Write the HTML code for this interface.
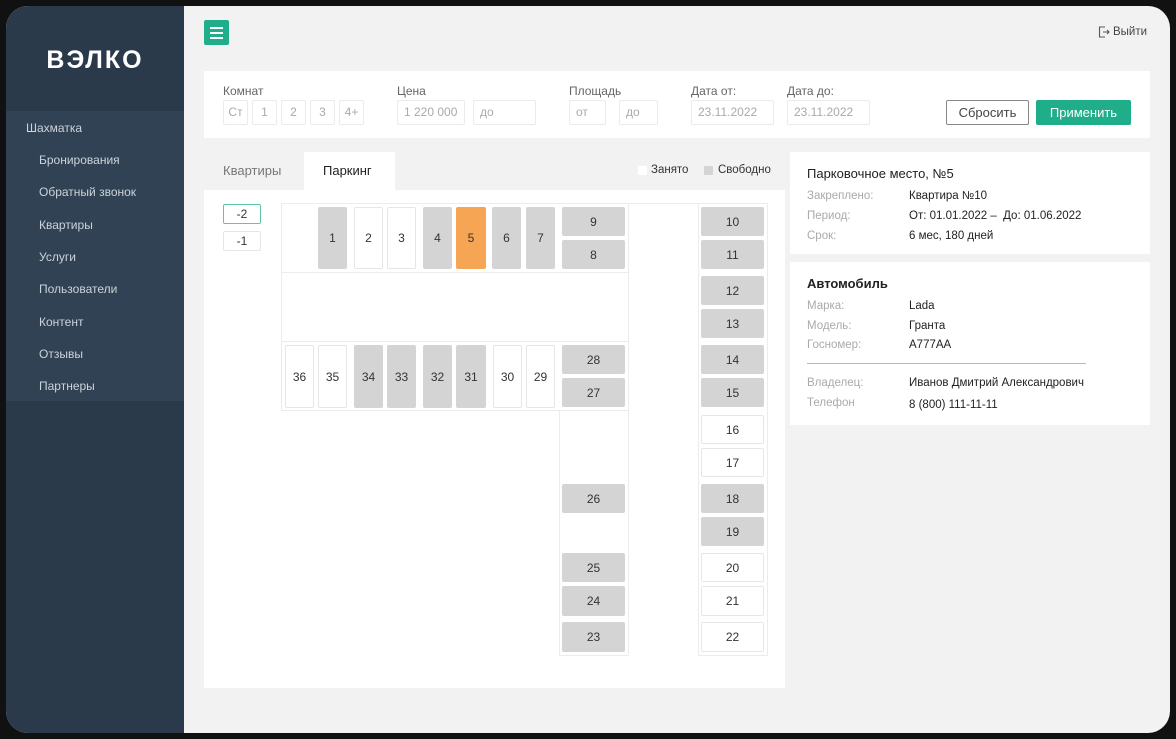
<!DOCTYPE html>
<html><head><meta charset="utf-8"><style>
*{margin:0;padding:0;box-sizing:border-box}
body{width:1176px;height:739px;background:#111;font-family:"Liberation Sans",Arial,sans-serif;position:relative;overflow:hidden}
.a{position:absolute}
#screen{left:6px;top:6px;width:1164px;height:727px;border-radius:22px;background:#f2f2f2;overflow:hidden}
#side{left:0;top:0;width:178px;height:727px;background:#2b3a4b}
.mi{position:absolute;font-size:12px;color:#cdd3da}
.lbl{position:absolute;font-size:12px;color:#666}
.inp{position:absolute;height:25px;border:1px solid #ebebeb;border-radius:2px;font-size:12px;color:#aaa;line-height:23px;padding-left:6px;background:#fff}
.inp.c{text-align:center;padding-left:0}
.s{position:absolute;border-radius:2px;font-size:12px;color:#333;display:flex;align-items:center;justify-content:center;background:#d4d4d4}
.w{background:#fff;border:1px solid #e6e6e6}
.o{background:#f5a553}
.k{position:absolute;font-size:11.5px;color:#aaa}
.v{position:absolute;font-size:11.5px;color:#222}
.ln{position:absolute;border:1px solid #ececec}
</style></head><body>
<div id="screen" class="a">
 <div id="side" class="a">
  <div class="a" style="left:0;top:105px;width:178px;height:290px;background:#314254"></div>
  <div class="a" style="left:0;top:40px;width:178px;text-align:center;color:#fff;font-size:25px;font-weight:bold;letter-spacing:2px">ВЭЛКО</div>
  <div class="mi" style="left:20px;top:115px">Шахматка</div>
  <div class="mi" style="left:33px;top:147px">Бронирования</div>
  <div class="mi" style="left:33px;top:179px">Обратный звонок</div>
  <div class="mi" style="left:33px;top:212px">Квартиры</div>
  <div class="mi" style="left:33px;top:244px">Услуги</div>
  <div class="mi" style="left:33px;top:276px">Пользователи</div>
  <div class="mi" style="left:33px;top:309px">Контент</div>
  <div class="mi" style="left:33px;top:341px">Отзывы</div>
  <div class="mi" style="left:33px;top:373px">Партнеры</div>
 </div>
</div>
<!-- hamburger -->
<div class="a" style="left:204px;top:20px;width:25px;height:25px;background:#1fae89;border-radius:2px"></div>
<div class="a" style="left:210px;top:27px;width:13px;height:2px;background:#fff"></div>
<div class="a" style="left:210px;top:32px;width:13px;height:2px;background:#fff"></div>
<div class="a" style="left:210px;top:37px;width:13px;height:2px;background:#fff"></div>
<svg class="a" style="left:1098px;top:26px" width="12" height="12" viewBox="0 0 12 12"><path d="M7 1H1.5v10H7M5 6h6M9 4l2 2-2 2" fill="none" stroke="#555" stroke-width="1.1"/></svg>
<div class="a" style="left:1113px;top:26px;font-size:11.5px;color:#444">Выйти</div>

<!-- filters -->
<div class="a" style="left:204px;top:71px;width:946px;height:67px;background:#fff"></div>
<div class="lbl" style="left:223px;top:84px">Комнат</div>
<div class="inp c" style="left:223px;top:100px;width:25px">Ст</div>
<div class="inp c" style="left:252px;top:100px;width:25px">1</div>
<div class="inp c" style="left:281px;top:100px;width:25px">2</div>
<div class="inp c" style="left:310px;top:100px;width:25px">3</div>
<div class="inp c" style="left:339px;top:100px;width:25px">4+</div>
<div class="lbl" style="left:397px;top:84px">Цена</div>
<div class="inp" style="left:397px;top:100px;width:68px">1 220 000</div>
<div class="inp" style="left:473px;top:100px;width:63px">до</div>
<div class="lbl" style="left:569px;top:84px">Площадь</div>
<div class="inp" style="left:569px;top:100px;width:37px">от</div>
<div class="inp" style="left:619px;top:100px;width:39px">до</div>
<div class="lbl" style="left:691px;top:84px">Дата от:</div>
<div class="inp" style="left:691px;top:100px;width:83px">23.11.2022</div>
<div class="lbl" style="left:787px;top:84px">Дата до:</div>
<div class="inp" style="left:787px;top:100px;width:83px">23.11.2022</div>
<div class="a" style="left:946px;top:100px;width:83px;height:25px;border:1px solid #888;border-radius:2px;font-size:13px;color:#444;text-align:center;line-height:23px">Сбросить</div>
<div class="a" style="left:1036px;top:100px;width:95px;height:25px;background:#1fae89;border-radius:2px;font-size:13px;color:#fff;text-align:center;line-height:25px">Применить</div>

<!-- tabs -->
<div class="a" style="left:223px;top:163px;font-size:13px;color:#777">Квартиры</div>
<div class="a" style="left:304px;top:152px;width:91px;height:40px;background:#fff"></div>
<div class="a" style="left:323px;top:163px;font-size:13px;color:#222">Паркинг</div>
<div class="a" style="left:638px;top:166px;width:9px;height:9px;background:#fff;border-radius:1px"></div>
<div class="a" style="left:651px;top:164px;font-size:11.5px;color:#333">Занято</div>
<div class="a" style="left:704px;top:166px;width:9px;height:9px;background:#d4d4d4;border-radius:1px"></div>
<div class="a" style="left:718px;top:164px;font-size:11.5px;color:#333">Свободно</div>

<div class="a" style="left:204px;top:190px;width:581px;height:498px;background:#fff"></div>
<div class="s w" style="left:223px;top:204px;width:38px;height:20px;border-color:#5cc6a8">-2</div>
<div class="s w" style="left:223px;top:231px;width:38px;height:20px">-1</div>

<!-- grid lines -->
<div class="ln" style="left:281px;top:203px;width:348px;height:70px"></div>
<div class="ln" style="left:281px;top:272px;width:348px;height:70px"></div>
<div class="ln" style="left:281px;top:341px;width:348px;height:70px"></div>
<div class="ln" style="left:559px;top:410px;width:70px;height:246px"></div>
<div class="ln" style="left:628px;top:203px;width:71px;height:453px;border-left:none;border-right:none;border-bottom:none"></div>
<div class="ln" style="left:698px;top:203px;width:70px;height:453px"></div>

<!-- top row -->
<div class="s" style="left:318px;top:207px;width:29px;height:62px">1</div>
<div class="s w" style="left:354px;top:207px;width:29px;height:62px">2</div>
<div class="s w" style="left:387px;top:207px;width:29px;height:62px">3</div>
<div class="s" style="left:423px;top:207px;width:29px;height:62px">4</div>
<div class="s o" style="left:456px;top:207px;width:30px;height:62px">5</div>
<div class="s" style="left:492px;top:207px;width:29px;height:62px">6</div>
<div class="s" style="left:526px;top:207px;width:29px;height:62px">7</div>
<div class="s" style="left:562px;top:207px;width:63px;height:29px">9</div>
<div class="s" style="left:562px;top:240px;width:63px;height:29px">8</div>
<!-- bottom row -->
<div class="s w" style="left:285px;top:345px;width:29px;height:63px">36</div>
<div class="s w" style="left:318px;top:345px;width:29px;height:63px">35</div>
<div class="s" style="left:354px;top:345px;width:29px;height:63px">34</div>
<div class="s" style="left:387px;top:345px;width:29px;height:63px">33</div>
<div class="s" style="left:423px;top:345px;width:29px;height:63px">32</div>
<div class="s" style="left:456px;top:345px;width:30px;height:63px">31</div>
<div class="s w" style="left:493px;top:345px;width:29px;height:63px">30</div>
<div class="s w" style="left:526px;top:345px;width:29px;height:63px">29</div>
<div class="s" style="left:562px;top:345px;width:63px;height:29px">28</div>
<div class="s" style="left:562px;top:378px;width:63px;height:29px">27</div>
<div class="s" style="left:562px;top:484px;width:63px;height:29px">26</div>
<div class="s" style="left:562px;top:553px;width:63px;height:29px">25</div>
<div class="s" style="left:562px;top:586px;width:63px;height:30px">24</div>
<div class="s" style="left:562px;top:622px;width:63px;height:30px">23</div>
<!-- right column -->
<div class="s" style="left:701px;top:207px;width:63px;height:29px">10</div>
<div class="s" style="left:701px;top:240px;width:63px;height:29px">11</div>
<div class="s" style="left:701px;top:276px;width:63px;height:29px">12</div>
<div class="s" style="left:701px;top:309px;width:63px;height:29px">13</div>
<div class="s" style="left:701px;top:345px;width:63px;height:29px">14</div>
<div class="s" style="left:701px;top:378px;width:63px;height:29px">15</div>
<div class="s w" style="left:701px;top:415px;width:63px;height:29px">16</div>
<div class="s w" style="left:701px;top:448px;width:63px;height:29px">17</div>
<div class="s" style="left:701px;top:484px;width:63px;height:29px">18</div>
<div class="s" style="left:701px;top:517px;width:63px;height:29px">19</div>
<div class="s w" style="left:701px;top:553px;width:63px;height:29px">20</div>
<div class="s w" style="left:701px;top:586px;width:63px;height:30px">21</div>
<div class="s w" style="left:701px;top:622px;width:63px;height:30px">22</div>

<!-- right cards -->
<div class="a" style="left:790px;top:152px;width:360px;height:102px;background:#fff"></div>
<div class="a" style="left:807px;top:166px;font-size:13px;color:#222;font-weight:500">Парковочное место, №5</div>
<div class="k" style="left:807px;top:190px">Закреплено:</div><div class="v" style="left:909px;top:190px">Квартира №10</div>
<div class="k" style="left:807px;top:210px">Период:</div><div class="v" style="left:909px;top:210px">От: 01.01.2022 –&nbsp; До: 01.06.2022</div>
<div class="k" style="left:807px;top:230px">Срок:</div><div class="v" style="left:909px;top:230px">6 мес, 180 дней</div>

<div class="a" style="left:790px;top:262px;width:360px;height:163px;background:#fff"></div>
<div class="a" style="left:807px;top:276px;font-size:13px;color:#222;font-weight:bold">Автомобиль</div>
<div class="k" style="left:807px;top:300px">Марка:</div><div class="v" style="left:909px;top:300px">Lada</div>
<div class="k" style="left:807px;top:320px">Модель:</div><div class="v" style="left:909px;top:320px">Гранта</div>
<div class="k" style="left:807px;top:339px">Госномер:</div><div class="v" style="left:909px;top:339px">А777АА</div>
<div class="a" style="left:807px;top:363px;width:279px;height:1px;background:#bbb"></div>
<div class="k" style="left:807px;top:377px">Владелец:</div><div class="v" style="left:909px;top:377px">Иванов Дмитрий Александрович</div>
<div class="k" style="left:807px;top:397px">Телефон</div><div class="v" style="left:909px;top:399px">8 (800) 111-11-11</div>
</body></html>
